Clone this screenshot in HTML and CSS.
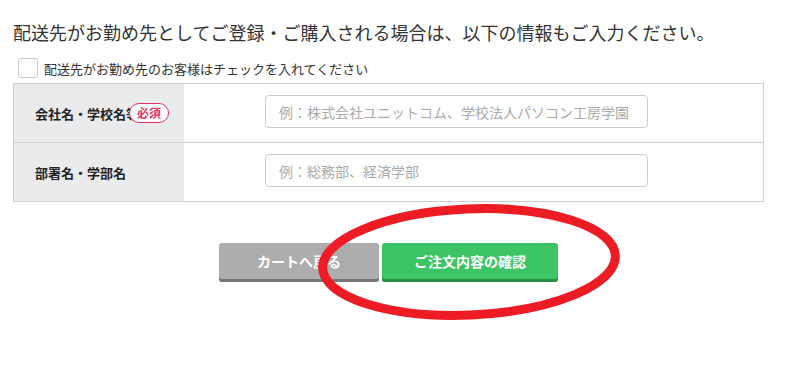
FILE: index.html
```html
<!DOCTYPE html>
<html lang="ja">
<head>
<meta charset="utf-8">
<link rel="stylesheet" href="styles.css">
</head>
<body>
<div class="page">
  <p class="lead">配送先がお勤め先としてご登録・ご購入される場合は、以下の情報もご入力ください。</p>
  <label class="check-row">
    <span class="checkbox"></span>
    <span class="check-text">配送先がお勤め先のお客様はチェックを入れてください</span>
  </label>
  <div class="form-table">
    <div class="row">
      <div class="label-cell">
        <span class="label-text">会社名・学校名等</span>
        <span class="badge">必須</span>
      </div>
      <div class="input-cell">
        <div class="input"><span class="placeholder">例：株式会社ユニットコム、学校法人パソコン工房学園</span></div>
      </div>
    </div>
    <div class="row">
      <div class="label-cell">
        <span class="label-text">部署名・学部名</span>
      </div>
      <div class="input-cell">
        <div class="input"><span class="placeholder">例：総務部、経済学部</span></div>
      </div>
    </div>
  </div>
  <div class="actions">
    <button class="btn btn-gray">カートへ戻る</button>
    <button class="btn btn-green">ご注文内容の確認</button>
  </div>
  <svg class="circle" width="310" height="124" viewBox="0 0 310 124">
    <ellipse cx="155" cy="62" rx="146.5" ry="53" transform="rotate(-2.5 155 62)" fill="none" stroke="#ed1c24" stroke-width="9"/>
  </svg>
</div>
</body>
</html>
```

FILE: styles.css
```css
html, body {
  margin: 0;
  padding: 0;
  background: #fff;
}
body {
  min-height: 367px;
  font-family: "Noto Sans CJK JP", "Noto Sans", sans-serif;
  color: #333;
}
.page {
  position: relative;
  width: 751px;
  min-height: 347px;
  padding: 20px 0 0 13px;
}
.lead {
  margin: 0;
  font-size: 18px;
  line-height: 24px;
  letter-spacing: 0;
  white-space: nowrap;
  color: #333;
}
.check-row {
  display: flex;
  align-items: center;
  gap: 6px;
  margin: 14px 0 0 5px;
  height: 20px;
}
.checkbox {
  width: 18px;
  height: 18px;
  border: 1px solid #c8c8c8;
  border-radius: 3px;
  background: #fff;
}
.check-text {
  font-size: 13px;
  line-height: 20px;
  margin-top: 2px;
  color: #333;
}
.form-table {
  margin-top: 5px;
  border: 1px solid #cfcfcf;
  border-bottom: none;
}
.row {
  display: flex;
  height: 58px;
  border-bottom: 1px solid #cfcfcf;
}
.label-cell {
  width: 149px;
  padding-left: 21px;
  background: #e9ebec;
  display: flex;
  align-items: center;
}
.label-text {
  font-size: 13px;
  font-weight: 700;
  white-space: nowrap;
  color: #222;
}
.label-cell .label-text:first-child:not(:last-child) {
  width: 94px;
  overflow: visible;
}
.badge {
  position: relative;
  box-sizing: border-box;
  width: 40px;
  height: 20px;
  border: 1px solid #e8336a;
  border-radius: 10px;
  background: #fff;
  color: #e8336a;
  font-size: 12px;
  font-weight: 700;
  line-height: 18px;
  text-align: center;
}
.input-cell {
  flex: 1;
  display: flex;
  align-items: flex-start;
  padding: 11px 0 0 81px;
  background: #fff;
}
.input {
  box-sizing: border-box;
  width: 383px;
  height: 33px;
  border: 1px solid #cccccc;
  border-radius: 4px;
  padding-left: 13px;
  display: flex;
  align-items: center;
}
.placeholder {
  font-size: 14px;
  color: #aaa;
  white-space: nowrap;
}
.actions {
  display: flex;
  justify-content: center;
  gap: 3px;
  margin-top: 41px;
}
.btn {
  box-sizing: border-box;
  height: 39px;
  border: none;
  border-radius: 3px;
  font-family: "Noto Sans CJK JP", "Noto Sans", sans-serif;
  font-size: 14px;
  font-weight: 700;
  color: #fff;
  padding: 0 0 3px;
  cursor: pointer;
}
.btn-gray {
  width: 160px;
  background: #adadad;
  box-shadow: inset 0 -3px 0 #777;
}
.btn-green {
  width: 176px;
  background: #3dc465;
  box-shadow: inset 0 -3px 0 #2c8d45;
}
.circle {
  position: absolute;
  left: 314px;
  top: 200px;
}
```
